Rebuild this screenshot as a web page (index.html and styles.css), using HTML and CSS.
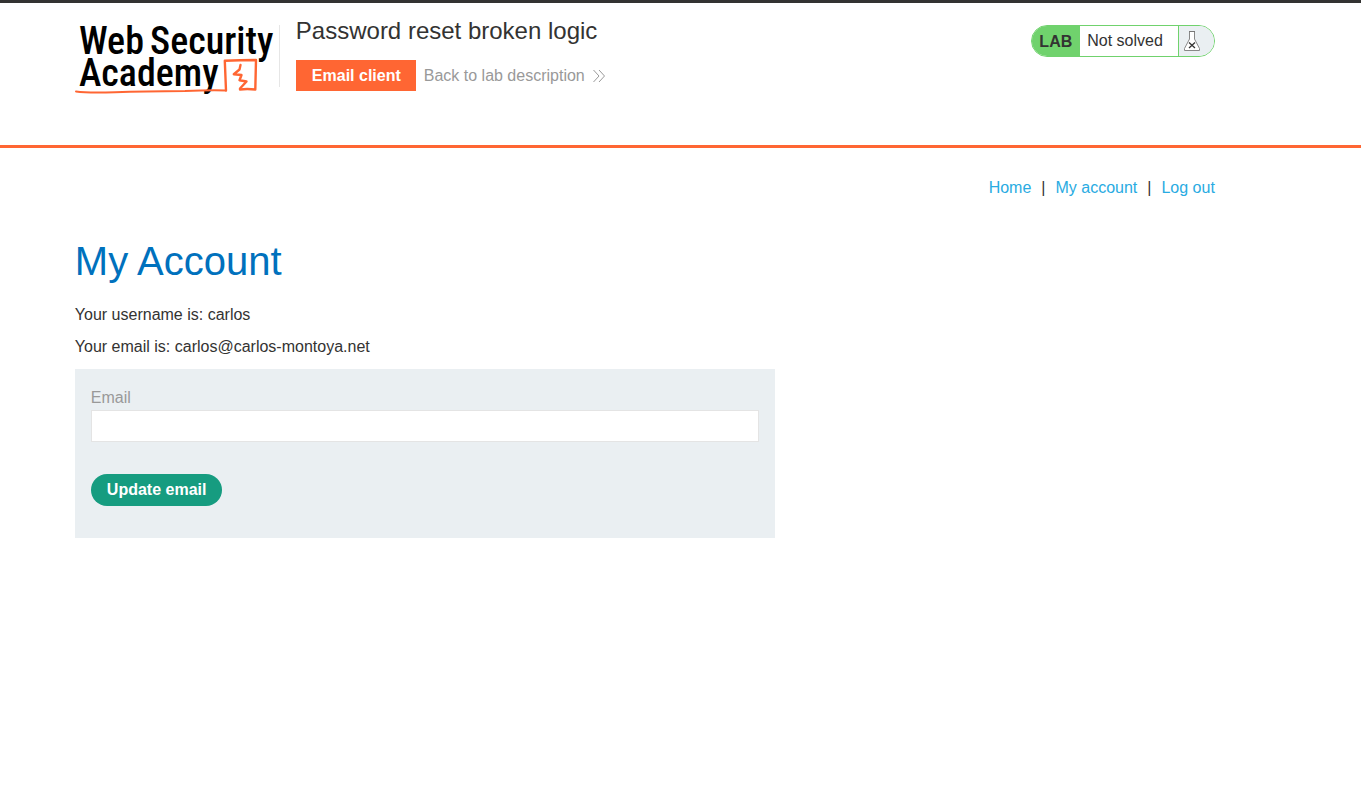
FILE: index.html
```html
<!DOCTYPE html>
<html lang="en">
<head>
<meta charset="utf-8">
<meta name="viewport" content="width=device-width, initial-scale=1">
<title>Password reset broken logic</title>
<link rel="stylesheet" href="styles.css">
</head>
<body>
<header class="lab-header">
  <div class="container lab-header-inner">
    <a class="logo" href="#" aria-label="Web Security Academy">
      <svg width="201" height="72" viewBox="0 0 201 72">
        <g class="logo-text">
          <text x="4" y="29">Web</text>
          <text x="75" y="29">Security</text>
          <text x="4" y="61">Academy</text>
        </g>
        <g fill="none" stroke="#ff6633" stroke-linejoin="round" stroke-linecap="round">
          <path stroke-width="2" d="M1 66.500Q12 68 40 67.200T110 66Q135 65 151 65.500"/>
          <path stroke-width="2.4" d="M151 65.500L149.800 35.800Q165 35 181 35L180.300 64.500Q172 63.500 165 64.500"/>
          <path stroke-width="2.4" d="M165.500 40L164.500 44.500L158.800 49.200L166.500 50L164.500 55.200L171.500 56.500L165 63.500"/>
        </g>
      </svg>
    </a>
    <div class="title-block">
      <h2 class="lab-title">Password reset broken logic</h2>
      <div class="lab-links">
        <a class="button-orange" href="#">Email client</a>
        <a class="link-back" href="#">Back to lab description
          <svg width="12" height="14" viewBox="0 0 12 14" fill="none" stroke="#999" stroke-width="1" aria-hidden="true"><path d="M.5 1l5.500 6-5.500 6M6 1l5.500 6L6 13"/></svg>
        </a>
      </div>
    </div>
    <div class="lab-status">
      <span class="status-label">LAB</span>
      <p class="status-text">Not solved</p>
      <span class="status-icon">
        <svg width="18" height="22" viewBox="0 0 18 22" aria-hidden="true">
          <path d="M6.500 1.500V9L1.500 18.500V20.500H16.500V18.500L11.500 9V1.500Z" fill="#fff" stroke="#888" stroke-width="1"/>
          <path d="M6 1.500H12" stroke="#777" stroke-width="1"/>
          <path d="M6 12.500L12 18M12 12.500L6 18" stroke="#333" stroke-width="1.300"/>
        </svg>
      </span>
    </div>
  </div>
</header>
<main class="container page">
  <nav class="top-links">
    <a href="#">Home</a><span>|</span><a href="#">My account</a><span>|</span><a href="#">Log out</a>
  </nav>
  <h1 class="heading">My Account</h1>
  <p class="detail">Your username is: carlos</p>
  <p class="detail">Your email is: carlos@carlos-montoya.net</p>
  <form class="email-form">
    <label for="email">Email</label>
    <input id="email" type="email" name="email">
    <button type="submit">Update email</button>
  </form>
</main>
</body>
</html>
```

FILE: styles.css
```css
* { box-sizing: border-box; }
body {
  margin: 0;
  background: #fff;
  color: #333332;
  font: 16px/24px "Liberation Sans", Arial, sans-serif;
}
a { text-decoration: none; }
h1, h2, p { margin: 0; font-weight: normal; }
.container {
  max-width: 1140px;
  margin-left: 5.5%;
}
.lab-header {
  border-top: 3px solid #333332;
  border-bottom: 3px solid #ff6633;
}
.lab-header-inner {
  display: flex;
  align-items: flex-start;
  padding-top: 12px;
  padding-bottom: 48px;
}
.logo {
  display: block;
  margin-top: 10px;
}
.logo svg { display: block; overflow: visible; }
.logo-text {
  fill: #000;
  font-family: "Roboto Condensed", Lato, sans-serif;
  font-size: 38px;
  font-weight: 500;
}
.title-block { flex: 1; position: relative; padding-left: 20px; }
.title-block::before {
  content: "";
  position: absolute;
  left: 3px;
  top: 10px;
  bottom: 4px;
  border-left: 1px solid #e6e6e6;
}
.lab-title { font-size: 24px; line-height: 32px; }
.lab-links {
  display: flex;
  align-items: center;
  gap: 8px;
  margin-top: 13px;
}
.button-orange {
  padding: 0 15px 0 16px;
  background: #ff6633;
  color: #fff;
  font-weight: bold;
  line-height: 31px;
}
.link-back {
  display: flex;
  align-items: center;
  gap: 8px;
  color: #999;
}
.lab-status {
  display: flex;
  height: 32px;
  margin-top: 10px;
  border: 1px solid #70d26d;
  border-radius: 16px;
  overflow: hidden;
  line-height: 30px;
}
.status-label {
  padding: 0 8px 0 7px;
  background: #70d26d;
  font-weight: bold;
  line-height: 31px;
}
.status-text { padding: 0 15px 0 7px; }
.status-icon {
  display: flex;
  align-items: center;
  width: 36px;
  padding-left: 4px;
  border-left: 1px solid #70d26d;
  background: #eaeff2;
}
.top-links {
  display: flex;
  justify-content: flex-end;
  gap: 10px;
  padding-top: 28px;
}
.top-links a { color: #29abe2; }
.top-links span { color: #333332; }
.heading {
  margin-top: 37px;
  color: #0071bd;
  font-size: 40px;
  line-height: 48px;
}
.detail { margin-top: 8px; }
.heading + .detail { margin-top: 18px; }
.email-form {
  display: flex;
  flex-direction: column;
  align-items: flex-start;
  max-width: 700px;
  margin-top: 10px;
  padding: 17px 16px 32px;
  background: #eaeff2;
}
.email-form label { color: #999; }
.email-form input {
  width: 100%;
  height: 32px;
  margin: 0 0 32px;
  padding: 0 8px;
  border: 1px solid #e4e4e4;
  background: #fff;
  font: inherit;
}
.email-form button {
  height: 32px;
  padding: 0 16px;
  border: 0;
  border-radius: 16px;
  background: #169c80;
  color: #fff;
  font: inherit;
  font-weight: bold;
}
```
